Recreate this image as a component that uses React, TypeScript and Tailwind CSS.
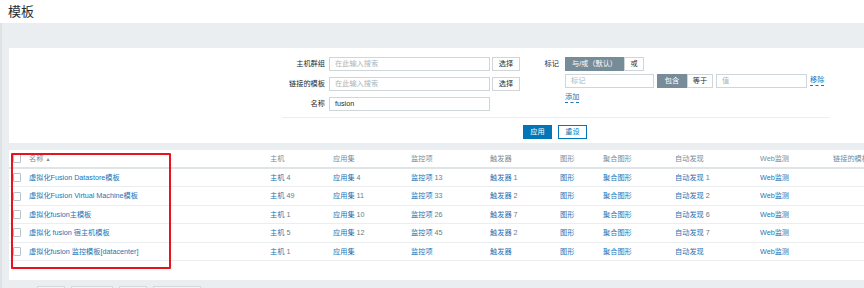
import React from "react";

const LINK = "text-[#1a73b5]";

type Row = {
  name: string;
  host: string;
  app: string;
  item: string;
  trig: string;
  disc: string;
};

const rows: Row[] = [
  { name: "虚拟化Fusion Datastore模板", host: "4", app: "4", item: "13", trig: "1", disc: "1" },
  { name: "虚拟化Fusion Virtual Machine模板", host: "49", app: "11", item: "33", trig: "2", disc: "2" },
  { name: "虚拟化fusion主模板", host: "1", app: "10", item: "26", trig: "7", disc: "6" },
  { name: "虚拟化 fusion 宿主机模板", host: "5", app: "12", item: "45", trig: "2", disc: "7" },
  { name: "虚拟化fusion 监控模板[datacenter]", host: "1", app: "", item: "", trig: "", disc: "" },
];

const GRID =
  "grid grid-cols-[20px_241px_63px_78px_79px_70px_43px_72px_85px_73px_1fr] items-center";

function Check() {
  return <div className="ml-[4px] w-[8px] h-[9px] border border-[#b7c3ca] bg-white rounded-[1px]" />;
}

function Cnt({ label, n }: { label: string; n: string }) {
  return (
    <div className="whitespace-nowrap">
      <span className={LINK}>{label}</span>
      {n && <span className="text-[#6b7b84]"> {n}</span>}
    </div>
  );
}

function Input({ ph, value, w }: { ph?: string; value?: string; w: string }) {
  return (
    <div className={`${w} h-[14px] border border-[#cfd6da] bg-white flex items-center px-[5px]`}>
      {value ? (
        <span className="text-[#1f2c33]">{value}</span>
      ) : (
        <span className="text-[#a9b6bd]">{ph}</span>
      )}
    </div>
  );
}

function SelBtn() {
  return (
    <div className="w-[28px] h-[14px] border border-[#cfd6da] bg-white flex items-center justify-center text-[#1f2c33]">
      选择
    </div>
  );
}

export default function App() {
  return (
    <div className="relative w-[864px] h-[288px] overflow-hidden bg-[#ebeef0] font-['Liberation_Sans','Noto_Sans_CJK_SC',sans-serif] text-[7.2px] leading-none text-[#1f2c33]">
      {/* header */}
      <div className="h-[23px] bg-white flex items-center pl-[8px]">
        <span className="text-[13px] text-[#1f2c33]">模板</span>
      </div>

      <div className="border-l-2 border-[#dde2e5] pl-[7px]">
        {/* filter tab band */}
        <div className="h-[25px]" />

        {/* filter panel */}
        <div className="bg-white h-[95px] pt-[9px]">
          <div className="flex">
            {/* left column */}
            <div className="ml-[258px] flex flex-col gap-[6px]">
              <div className="flex items-center gap-[2px]">
                <div className="w-[60px] text-right pr-[2px]">主机群组</div>
                <Input w="w-[161px]" ph="在此输入搜索" />
                <SelBtn />
              </div>
              <div className="flex items-center gap-[2px]">
                <div className="w-[60px] text-right pr-[2px]">链接的模板</div>
                <Input w="w-[161px]" ph="在此输入搜索" />
                <SelBtn />
              </div>
              <div className="flex items-center gap-[2px]">
                <div className="w-[60px] text-right pr-[2px]">名称</div>
                <Input w="w-[161px]" value="fusion" />
              </div>
            </div>
            {/* right column */}
            <div className="ml-[10px] flex flex-col">
              <div className="flex items-center gap-[6px]">
                <div className="w-[29px] text-right">标记</div>
                <div className="flex h-[14px]">
                  <div className="w-[59px] bg-[#768d99] text-white flex items-center justify-center">与/或（默认）</div>
                  <div className="w-[20px] border border-[#cfd6da] bg-white flex items-center justify-center">或</div>
                </div>
              </div>
              <div className="flex items-center mt-[3px] ml-[35px]">
                <Input w="w-[89px]" ph="标记" />
                <div className="flex h-[14px] ml-[3px]">
                  <div className="w-[30px] bg-[#768d99] text-white flex items-center justify-center">包含</div>
                  <div className="w-[26px] border border-[#cfd6da] bg-white flex items-center justify-center">等于</div>
                </div>
                <div className="ml-[3px]">
                  <Input w="w-[91px]" ph="值" />
                </div>
                <span className={`ml-[3px] ${LINK} border-b border-dashed border-[#1a73b5] pb-[1px]`}>移除</span>
              </div>
              <div className="mt-[5px] ml-[35px]">
                <span className={`${LINK} border-b border-dashed border-[#1a73b5] pb-[1px]`}>添加</span>
              </div>
            </div>
          </div>
          <div className="ml-[273px] w-[547px] h-px bg-[#ebeef0] mt-[6px]" />
          <div className="flex gap-[6px] mt-[7px] ml-[514px]">
            <div className="w-[29px] h-[14px] bg-[#0275b8] text-white flex items-center justify-center">应用</div>
            <div className="w-[29px] h-[14px] border border-[#0275b8] bg-white text-[#0275b8] flex items-center justify-center">重设</div>
          </div>
        </div>

        {/* table panel */}
        <div className="mt-[7px] bg-white h-[130px]">
          <div className={`${GRID} h-[19px] border-b-2 border-[#dfe4e7] text-[#768d99]`}>
            <Check />
            <div>名称 <span className="text-[5px]">▲</span></div>
            <div>主机</div>
            <div>应用集</div>
            <div>监控项</div>
            <div>触发器</div>
            <div>图形</div>
            <div>聚合图形</div>
            <div>自动发现</div>
            <div>Web监测</div>
            <div className="whitespace-nowrap">链接的模板</div>
          </div>
          {rows.map((r, i) => (
            <div key={i} className={`${GRID} h-[18.4px] border-b border-[#ebeef0]`}>
              <Check />
              <div className={`${LINK} whitespace-nowrap`}>{r.name}</div>
              <Cnt label="主机" n={r.host} />
              <Cnt label="应用集" n={r.app} />
              <Cnt label="监控项" n={r.item} />
              <Cnt label="触发器" n={r.trig} />
              <div className={LINK}>图形</div>
              <div className={LINK}>聚合图形</div>
              <Cnt label="自动发现" n={r.disc} />
              <div className={LINK}>Web监测</div>
              <div />
            </div>
          ))}
        </div>

        {/* bottom action buttons (cut off) */}
        <div className="flex gap-[6px] pl-[28px] mt-[6px]">
          <div className="w-[28px] h-[10px] border border-[#d3d9dd] bg-[#f2f4f5]" />
          <div className="w-[42px] h-[10px] border border-[#d3d9dd] bg-[#f2f4f5]" />
          <div className="w-[28px] h-[10px] border border-[#d3d9dd] bg-[#f2f4f5]" />
          <div className="w-[48px] h-[10px] border border-[#d3d9dd] bg-[#f2f4f5]" />
        </div>
      </div>

      {/* red annotation box */}
      <div className="absolute left-[11px] top-[153px] w-[160px] h-[116px] border-2 border-[#e8141b] rounded-[1px] pointer-events-none" />
    </div>
  );
}
